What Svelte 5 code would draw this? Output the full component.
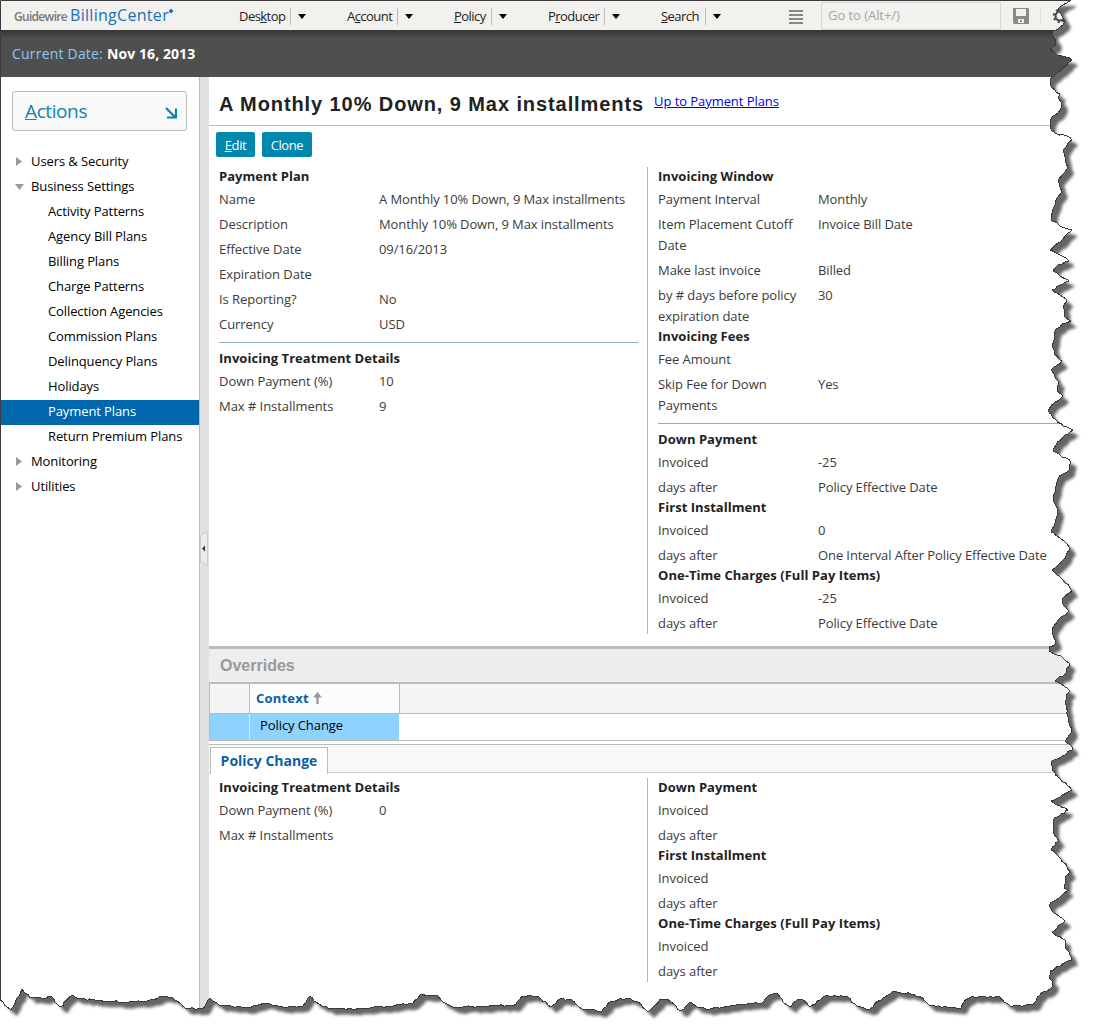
<script>
  const menus = [
    { pre: 'Des', key: 'k', post: 'top', w: 108 },
    { pre: 'A', key: 'c', post: 'count', w: 107 },
    { pre: '', key: 'P', post: 'olicy', w: 94 },
    { pre: 'P', key: 'r', post: 'oducer', w: 113 },
    { pre: '', key: 'S', post: 'earch', w: 100 }
  ];

  const tree = [
    { label: 'Users & Security', arrow: 'closed' },
    { label: 'Business Settings', arrow: 'open' },
    { label: 'Activity Patterns', child: true },
    { label: 'Agency Bill Plans', child: true },
    { label: 'Billing Plans', child: true },
    { label: 'Charge Patterns', child: true },
    { label: 'Collection Agencies', child: true },
    { label: 'Commission Plans', child: true },
    { label: 'Delinquency Plans', child: true },
    { label: 'Holidays', child: true },
    { label: 'Payment Plans', child: true, selected: true },
    { label: 'Return Premium Plans', child: true },
    { label: 'Monitoring', arrow: 'closed' },
    { label: 'Utilities', arrow: 'closed' }
  ];

  // Entries: a string is a heading, null is a rule, a pair is label and value.
  const planLeft = [
    'Payment Plan',
    ['Name', 'A Monthly 10% Down, 9 Max installments'],
    ['Description', 'Monthly 10% Down, 9 Max installments'],
    ['Effective Date', '09/16/2013'],
    ['Expiration Date', ''],
    ['Is Reporting?', 'No'],
    ['Currency', 'USD'],
    null,
    'Invoicing Treatment Details',
    ['Down Payment (%)', '10'],
    ['Max # Installments', '9']
  ];
  const planRight = [
    'Invoicing Window',
    ['Payment Interval', 'Monthly'],
    ['Item Placement Cutoff Date', 'Invoice Bill Date'],
    ['Make last invoice', 'Billed'],
    ['by # days before policy expiration date', '30'],
    'Invoicing Fees',
    ['Fee Amount', ''],
    ['Skip Fee for Down Payments', 'Yes'],
    null,
    'Down Payment',
    ['Invoiced', '-25'],
    ['days after', 'Policy Effective Date'],
    'First Installment',
    ['Invoiced', '0'],
    ['days after', 'One Interval After Policy Effective Date'],
    'One-Time Charges (Full Pay Items)',
    ['Invoiced', '-25'],
    ['days after', 'Policy Effective Date']
  ];
  const changeLeft = [
    'Invoicing Treatment Details',
    ['Down Payment (%)', '0'],
    ['Max # Installments', '']
  ];
  const changeRight = [
    'Down Payment',
    ['Invoiced', ''],
    ['days after', ''],
    'First Installment',
    ['Invoiced', ''],
    ['days after', ''],
    'One-Time Charges (Full Pay Items)',
    ['Invoiced', ''],
    ['days after', '']
  ];

  // Torn paper edge: down the right side, then back along the bottom.
  const edge = `1071,0 1067,3 1061,6 1058,9 1061,14 1065,21 1063,25 1053,31 1052,35 1054,38 1056,41 1055,46 1050,49 1054,52 1062,56 1072,60 1066,66 1056,74 1050,79 1050,84 1055,90 1060,94 1058,98 1062,103 1060,110 1053,116 1050,121 1050,125 1052,131 1057,134 1067,136 1072,140 1068,143 1064,149 1065,157 1066,163 1068,168 1063,174 1058,180 1060,187 1062,192 1058,197 1054,207 1052,213 1052,221 1058,224 1065,228 1072,230 1067,234 1060,242 1050,250 1062,256 1069,261 1058,265 1053,271 1060,276 1069,281 1060,285 1052,290 1060,295 1067,300 1063,306 1065,317 1071,321 1062,324 1056,329 1054,340 1053,348 1055,355 1062,361 1051,370 1055,377 1059,382 1057,391 1063,396 1055,402 1048,410 1053,418 1063,426 1073,430 1063,437 1056,445 1053,451 1062,457 1071,462 1069,470 1058,479 1056,490 1053,498 1058,512 1055,523 1051,532 1064,541 1070,549 1063,560 1052,570 1065,583 1072,591 1062,600 1064,606 1069,611 1058,620 1052,632 1055,640 1056,643 1049,647 1049,651 1063,658 1069,663 1067,672 1055,681 1065,687 1070,691 1066,695 1066,705 1068,720 1072,729 1065,741 1072,747 1072,750 1062,756 1052,761 1052,770 1060,779 1072,790 1060,797 1051,801 1068,810 1053,820 1053,832 1059,841 1051,850 1058,856 1064,863 1070,871 1065,877 1064,888 1068,890 1057,899 1049,905 1052,911 1065,921 1052,932 1065,940 1065,948 1069,952 1072,960 1050,971 1049,977 1053,982 1052,987 1040,995 1033,1005 1013,1006 1010,1006 1000,997 978,997 972,996 963,1003 961,1008 930,1006 920,996 893,991 883,998 870,1009 857,1006 848,997 825,996 810,1007 802,999 798,999 791,1007 783,1002 778,994 768,996 762,1003 730,1006 710,1009 697,1007 691,1002 680,1011 668,999 660,999 648,1012 638,1002 627,998 610,1002 602,1011 582,1009 572,1000 560,999 551,1007 538,996 522,996 513,1006 492,1005 485,1007 453,1007 443,1002 437,995 420,995 413,1003 390,1006 365,1008 333,1009 322,1006 310,996 303,1006 283,1007 267,1003 247,1008 220,1006 210,998 202,1009 185,1008 172,997 163,996 147,1001 123,1002 97,1001 77,998 72,995 60,1007 52,997 30,998 22,989 11,1010 0,1000`
    .split(/\s+/)
    .map((p) => p.split(',').map(Number));

  // Roughens the edge with small, repeatable nicks.
  function roughen(points) {
    let seed = 7;
    const nick = () => {
      seed = (seed * 1103515245 + 12345) % 2147483648;
      return (seed / 2147483648 - 0.5) * 2;
    };
    const out = [];
    points.forEach((p, i) => {
      out.push(p);
      const q = points[i + 1];
      if (!q) return;
      const n = Math.floor(Math.hypot(q[0] - p[0], q[1] - p[1]) / 3);
      for (let k = 1; k < n; k++) {
        out.push([p[0] + ((q[0] - p[0]) * k) / n + nick(), p[1] + ((q[1] - p[1]) * k) / n + nick()]);
      }
    });
    return out.map(([x, y]) => x.toFixed(1) + ' ' + y.toFixed(1)).join('L');
  }
  const torn = 'M0 0L' + roughen(edge) + 'Z';
  const outline = 'M' + roughen(edge);
</script>

{#snippet column(items)}
  <div class="column">
    {#each items as item}
      {#if item === null}
        <hr />
      {:else if typeof item === 'string'}
        <h3>{item}</h3>
      {:else}
        <div class="row"><span class="label">{item[0]}</span><span class="value">{item[1]}</span></div>
      {/if}
    {/each}
  </div>
{/snippet}

<div class="page">
  <header>
    <div class="logo"><span class="gw">Guidewire</span><span class="bc">BillingCenter</span><i></i></div>
    <nav>
      {#each menus as m}
        <div class="menu" style:width="{m.w}px">
          <span>{m.pre}<u>{m.key}</u>{m.post}</span><b></b>
          <svg width="8" height="5" viewBox="0 0 8 5"><path d="M0 0H8L4 5Z" /></svg>
        </div>
      {/each}
    </nav>
    <svg class="lines" width="14" height="14" viewBox="0 0 14 14"><path d="M0 1H14M0 5H14M0 9H14M0 13H14" stroke="#888" stroke-width="2" /></svg>
    <div class="goto">Go to (Alt+/)</div>
    <svg class="disk" width="16" height="16" viewBox="0 0 16 16"><path fill-rule="evenodd" fill="#898989" d="M0 0H15L16 1V16H1L0 15ZM3 1V8H13V1ZM5 11V15H11V11Z" /><rect x="7" y="12" width="2" height="2" fill="#898989" /></svg>
    <span class="tick"></span>
    <svg class="gear" width="16" height="16" viewBox="0 0 16 16"><circle cx="8" cy="8" r="4.5" fill="none" stroke="#444" stroke-width="2" /><circle cx="8" cy="8" r="6.3" fill="none" stroke="#444" stroke-width="2" stroke-dasharray="2.2 2.75" /></svg>
  </header>

  <div class="band"><span>Current Date:</span><strong>Nov 16, 2013</strong></div>

  <div class="body">
    <aside>
      <div class="actions">
        <span><u>A</u>ctions</span>
        <svg width="12" height="12" viewBox="0 0 12 12"><path d="M1 1L10 10M11 1.5V10.5H2" fill="none" stroke="#0087ae" stroke-width="2.2" /></svg>
      </div>
      <ul>
        {#each tree as t}
          <li class:child={t.child} class:selected={t.selected}>
            {#if t.arrow === 'closed'}
              <svg width="9" height="9" viewBox="0 0 9 9"><path d="M1 0L7 4.5L1 9Z" /></svg>
            {:else if t.arrow === 'open'}
              <svg width="9" height="9" viewBox="0 0 9 9"><path d="M0 2H9L4.500 8Z" /></svg>
            {/if}
            <span>{t.label}</span>
          </li>
        {/each}
      </ul>
    </aside>

    <div class="splitter">
      <svg width="8" height="35" viewBox="0 0 8 35"><path d="M.5 4.500L7.500 .8V34.200L.5 30.500Z" fill="#ececec" stroke="#cdcdcd" /><path d="M5 14.500V20.500L2 17.500Z" fill="#333" /></svg>
    </div>

    <main>
      <div class="title">
        <h1>A Monthly 10% Down, 9 Max installments</h1>
        <span class="up">Up to Payment Plans</span>
      </div>
      <div class="buttons">
        <button class="edit"><u>E</u>dit</button><button class="clone">Clone</button>
      </div>
      <div class="form plan">
        {@render column(planLeft)}
        <div class="divider"></div>
        {@render column(planRight)}
      </div>

      <h2>Overrides</h2>
      <div class="grid">
        <div class="ghead"><span class="c1"></span><span class="c2">Context
          <svg width="9" height="12" viewBox="0 0 9 12"><path d="M4.500 0L9 5.500H5.700V12H3.300V5.500H0Z" fill="#999" /></svg></span></div>
        <div class="grow"><span class="c1"></span><span class="c2">Policy Change</span></div>
      </div>
      <div class="tabs"><span>Policy Change</span></div>
      <div class="form change">
        {@render column(changeLeft)}
        <div class="divider"></div>
        {@render column(changeRight)}
      </div>
    </main>
  </div>

  <svg class="torn" width="1095" height="1036" viewBox="0 0 1095 1036">
    <defs>
      <filter id="soft" x="-5%" y="-5%" width="110%" height="110%"><feGaussianBlur stdDeviation="1.5" /></filter>
      <clipPath id="outside"><path clip-rule="evenodd" d="M-1 -1H1096V1037H-1Z{torn}" /></clipPath>
    </defs>
    <g clip-path="url(#outside)">
      <rect width="1095" height="1036" fill="#fff" />
      <path d={torn} transform="translate(6 6)" fill="#666" filter="url(#soft)" />
    </g>
    <path d={outline} fill="none" stroke="#3a3a3c" shape-rendering="crispEdges" />
    <path d="M.5 1000V.5H1071" fill="none" stroke="#3a3a3c" />
  </svg>
</div>

<style>
  :global(body) { background: #fff; overflow: hidden; }
  .page {
    position: relative; width: 1095px; height: 1036px; overflow: hidden; box-sizing: border-box;
    padding: 1px 0 0 1px; display: flex; flex-direction: column;
    font-family: 'Open Sans', 'Noto Sans', sans-serif; font-size: 13px; color: #3b3b3b;
  }
  header { height: 29px; flex: none; display: flex; align-items: center; background: #f3f1ed; color: #222; }
  .logo { width: 238px; display: flex; align-items: baseline; padding-left: 13px; box-sizing: border-box; height: 27px; line-height: 26px; white-space: nowrap; }
  .gw { font-size: 12px; color: #777; font-weight: 600; letter-spacing: -0.7px; width: 56px; }
  .bc { font-size: 16px; color: #1a70b8; letter-spacing: 0.3px; }
  .logo i { width: 2px; height: 2px; border: 1px solid #1a70b8; background: #1a70b8; border-radius: 50%; align-self: flex-start; margin: 7px 0 0 0; }
  nav { display: flex; width: 550px; padding-top: 1px; }
  .menu { display: flex; align-items: center; }
  .menu span { letter-spacing: -0.55px; line-height: 18px; }
  .menu b { width: 1px; height: 17px; background: #bbb; margin: 0 7px 0 5px; }
  .menu:last-child b { margin-left: 6px; }
  .lines { margin-top: 3px; }
  .goto { margin-left: 18px; width: 180px; height: 28px; border: 1px solid #d5d5d5; box-sizing: border-box; line-height: 25px; padding-left: 6px; color: #a5a5a5; letter-spacing: -0.05px; }
  .disk { margin: 1px 0 0 12px; }
  .tick { width: 1px; height: 14px; background: #dadada; margin: 0 11px; }
  .band { height: 47px; flex: none; line-height: 47px; padding-left: 11px; font-size: 14px; color: #8cc8f5; background: linear-gradient(#353535, #4f4f4f 9px); }
  .band span { letter-spacing: 0.2px; margin-right: 4px; }
  strong { color: #fff; letter-spacing: 0.08px; }
  .body { flex: 1; display: flex; min-height: 0; }
  aside { width: 198px; border-right: 1px solid #b9b9b9; }
  .actions { margin: 14px 12px 19px 11px; height: 40px; box-sizing: border-box; border: 1px solid #bbb; border-radius: 3px; background: #f8f8f8; display: flex; align-items: center; justify-content: space-between; padding: 0 9px 0 12px; font-size: 19px; letter-spacing: -0.4px; color: #0d83ac; }
  .actions svg { margin-top: 3px; }
  ul { list-style: none; margin: 0; padding: 0; color: #000; letter-spacing: -0.1px; }
  li { height: 25px; line-height: 23px; display: flex; padding-left: 14px; }
  li svg { margin: 7px 7px 0 0; fill: #999; }
  .child { padding-left: 47px; }
  .selected { background: #0067ac; color: #fff; }
  .splitter { width: 9px; background: #e1e1e1; }
  .splitter svg { margin-top: 454px; }
  main { flex: 1; display: flex; flex-direction: column; }
  .title { height: 48px; border-bottom: 1px solid #bbb; display: flex; padding-left: 10px; }
  h1 { margin: 0; width: 435px; white-space: nowrap; font: bold 20px/54px 'Liberation Sans', Arial, sans-serif; letter-spacing: 0.910px; color: #222; }
  .up { color: #00e; line-height: 49px; text-decoration: underline; letter-spacing: -0.06px; }
  .buttons { padding: 6px 0 0 7px; display: flex; gap: 7px; height: 35px; }
  button { height: 25px; border: 0; border-radius: 2px; padding: 0; background: #0087ae; color: #fff; font: 13px/24px 'Open Sans', sans-serif; letter-spacing: -0.4px; }
  .edit { width: 39px; }
  .clone { width: 50px; }
  .form { display: grid; grid-template-columns: 419px 1px 1fr; grid-template-rows: 100%; padding-left: 10px; column-gap: 9px; }
  .column { padding-top: 2px; height: 0; }
  .form .column:last-child { margin-left: 1px; }
  .plan { height: 467px; margin-bottom: 2px; }
  .change { height: 204px; padding-top: 5px; }
  .divider { background: #a3b8cc; }
  h3 { margin: 0; height: 15px; padding-bottom: 3px; font-size: 13px; line-height: 15px; font-weight: 700; color: #222; letter-spacing: 0.04px; }
  .row { display: grid; grid-template-columns: 142px 1fr; column-gap: 18px; line-height: 21px; padding: 2px 0; letter-spacing: -0.1px; }
  .label { letter-spacing: -0.05px; }
  hr { border: 0; height: 1px; background: #91adc6; margin: 5px 0 8px; }
  h2 { margin: 10px 0 0; height: 33px; border-top: 3px solid #bbb; border-bottom: 2px solid #bbb; background: #eee; font: bold 16px/34px 'Liberation Sans', Arial, sans-serif; color: #999; padding-left: 11px; }
  .grid { border-left: 1px solid #bbb; border-bottom: 1px solid #bbb; }
  .ghead { height: 29px; background: #f5f5f5; border-bottom: 1px solid #bbb; display: flex; line-height: 29px; font-weight: 700; color: #0b5fa5; letter-spacing: 0.2px; }
  .c1 { width: 39px; border-right: 1px solid #bbb; }
  .c2 { width: 143px; padding-left: 6px; border-right: 1px solid #bbb; }
  .ghead .c2 { background: #fcfcfc; }
  .ghead svg { vertical-align: -1px; margin-left: 1px; }
  .grow { height: 26px; display: flex; line-height: 23px; color: #000; letter-spacing: -0.08px; }
  .grow span { background: #8fd2ff; border-color: #cfeaff; }
  .grow .c2 { width: 139px; padding-left: 10px; border-color: #fff; }
  .tabs { margin-top: 3px; height: 27px; border-top: 1px solid #bbb; border-bottom: 1px solid #ccc; background: #f8f8f7; display: flex; padding-left: 1px; }
  .tabs span { width: 116px; height: 26px; margin-top: 2px; border: 1px solid #bbb; border-bottom: 0; background: #fff; line-height: 26px; text-align: center; font-size: 14px; font-weight: 700; color: #0b5fa5; }
  .torn { position: absolute; inset: 0; pointer-events: none; }
</style>
